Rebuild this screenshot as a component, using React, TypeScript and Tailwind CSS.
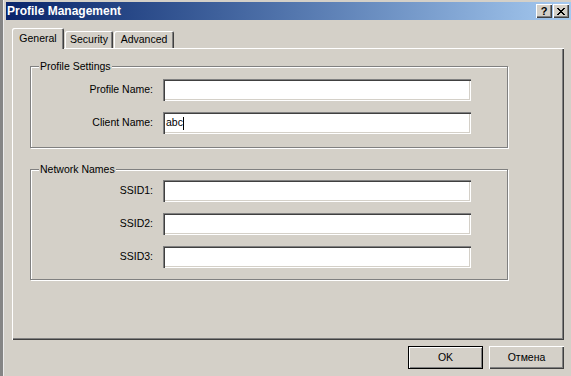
import React from 'react';

// Win2000 classic bevels
const raised = 'shadow-[inset_1px_1px_0_#ffffff,inset_-1px_-1px_0_#404040,inset_-2px_-2px_0_#808080]';
const sunken =
  'shadow-[inset_1px_1px_0_#808080,inset_2px_2px_0_#404040,inset_-1px_-1px_0_#ffffff,inset_-2px_-2px_0_#d4d0c8]';

const Field = ({ label, value = '', caret = false }: { label: string; value?: string; caret?: boolean }) => (
  <div className="flex items-center gap-[10px]">
    <span className="w-[122px] text-right">{label}</span>
    <div className={`flex h-[22px] w-[308px] items-center bg-white pl-[3px] ${sunken}`}>
      <span>{value}</span>
      {caret && <span className="h-[13px] w-px bg-black" />}
    </div>
  </div>
);

const Group = ({ title, className, children }: { title: string; className: string; children: React.ReactNode }) => (
  <div className={`relative w-[478px] border border-[#808080] shadow-[inset_1px_1px_0_#ffffff,1px_1px_0_#ffffff] ${className}`}>
    <span className="absolute -top-[7px] left-[8px] bg-[#d4d0c8] px-px leading-[13px]">{title}</span>
    <div className="flex flex-col gap-[11px]">{children}</div>
  </div>
);

const CloseGlyph = () => (
  <svg width="8" height="7" viewBox="0 0 8 7" shapeRendering="crispEdges">
    <path
      fill="#000"
      d="M0 0h2v1H0zM6 0h2v1H6zM1 1h2v1H1zM5 1h2v1H5zM2 2h4v1H2zM3 3h2v1H3zM2 4h4v1H2zM1 5h2v1H1zM5 5h2v1H5zM0 6h2v1H0zM6 6h2v1H6z"
    />
  </svg>
);

const App: React.FC = () => {
  return (
    <div className="flex h-[376px] w-[571px] overflow-hidden bg-[#d4d0c8] font-['Liberation_Sans',Arial,sans-serif] text-[10.5px] text-black">
      {/* window edge */}
      <div className="w-[3px] bg-[#858585]" />
      <div className="w-px bg-[#ececec]" />

      <div className="flex flex-1 flex-col pt-[2px]">
        {/* Title bar */}
        <div className="ml-[2px] flex h-[18px] items-center justify-between bg-linear-to-r from-[#0a246a] to-[#a6caf0] pl-[1px] pr-[2px]">
          <span className="text-[12px] font-bold text-white">Profile Management</span>
          <div className="flex gap-px">
            <div className={`flex h-[14px] w-[16px] items-center justify-center bg-[#d4d0c8] text-[11px] font-bold leading-none ${raised}`}>
              ?
            </div>
            <div className={`flex h-[14px] w-[16px] items-center justify-center bg-[#d4d0c8] ${raised}`}>
              <CloseGlyph />
            </div>
          </div>
        </div>

        <div className="pl-[8px]">
          {/* Tabs */}
          <div className="mt-[8px] flex h-[20px] items-start">
            <div className="relative z-10 flex h-[21px] w-[52px] items-start justify-center rounded-t-[2px] bg-[#d4d0c8] pt-[3px] shadow-[inset_1px_1px_0_#ffffff,inset_-1px_0_0_#404040,inset_-2px_0_0_#808080]">
              General
            </div>
            <div className="ml-px mt-[3px] flex h-[17px] w-[48px] items-center justify-center rounded-t-[2px] shadow-[inset_1px_1px_0_#ffffff,inset_-1px_0_0_#404040,inset_-2px_0_0_#808080]">
              Security
            </div>
            <div className="ml-px mt-[3px] flex h-[17px] w-[60px] items-center justify-center rounded-t-[2px] shadow-[inset_1px_1px_0_#ffffff,inset_-1px_0_0_#404040,inset_-2px_0_0_#808080]">
              Advanced
            </div>
          </div>

          {/* Tab page */}
          <div className={`h-[292px] w-[552px] pl-[18px] pt-[18px] ${raised}`}>
            <Group title="Profile Settings" className="h-[82px] pt-[12px]">
              <Field label="Profile Name:" />
              <Field label="Client Name:" value="abc" caret />
            </Group>
            <Group title="Network Names" className="mt-[21px] h-[111px] pt-[10px]">
              <Field label="SSID1:" />
              <Field label="SSID2:" />
              <Field label="SSID3:" />
            </Group>
          </div>

          {/* Buttons */}
          <div className="mt-[6px] flex w-[552px] justify-end gap-[6px]">
            <button className="h-[23px] w-[75px] border border-black bg-[#d4d0c8] shadow-[inset_1px_1px_0_#ffffff,inset_-1px_-1px_0_#808080]">
              OK
            </button>
            <button className={`h-[23px] w-[75px] bg-[#d4d0c8] ${raised}`}>Отмена</button>
          </div>
        </div>
      </div>
    </div>
  );
};

export default App;
